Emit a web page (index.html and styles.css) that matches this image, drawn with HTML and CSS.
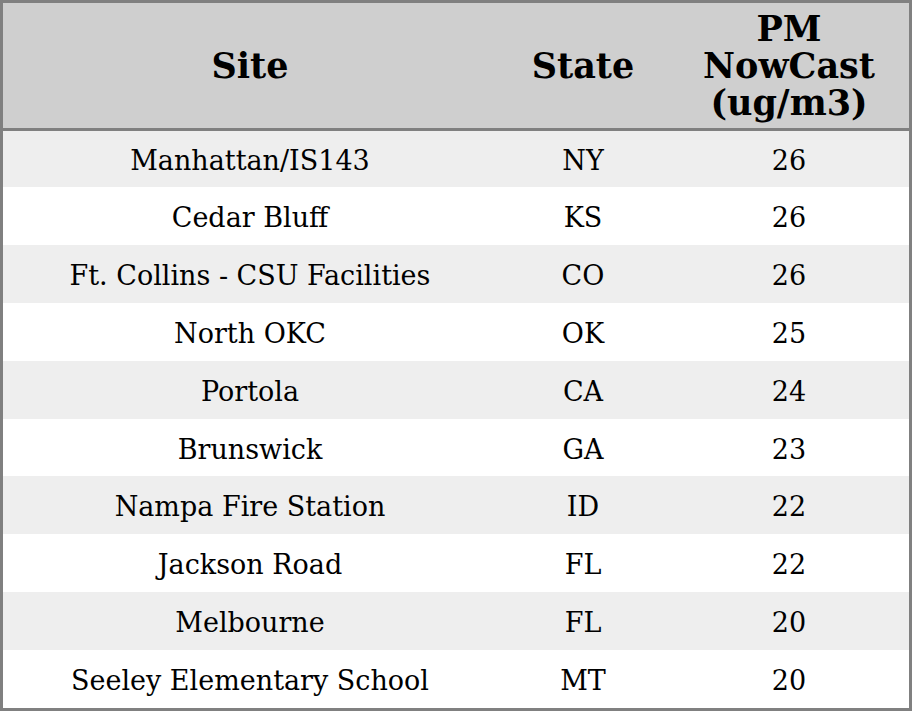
FILE: index.html
```html
<!DOCTYPE html>
<html>
<head>
<meta charset="utf-8">
<link rel="stylesheet" href="styles.css">
</head>
<body>
<table class="aq">
  <colgroup>
    <col class="c-site"><col class="c-state"><col class="c-pm">
  </colgroup>
  <thead>
    <tr><th>Site</th><th>State</th><th>PM<br>NowCast<br>(ug/m3)</th></tr>
  </thead>
  <tbody>
    <tr><td>Manhattan/IS143</td><td>NY</td><td>26</td></tr>
    <tr><td>Cedar Bluff</td><td>KS</td><td>26</td></tr>
    <tr><td>Ft. Collins - CSU Facilities</td><td>CO</td><td>26</td></tr>
    <tr><td>North OKC</td><td>OK</td><td>25</td></tr>
    <tr><td>Portola</td><td>CA</td><td>24</td></tr>
    <tr><td>Brunswick</td><td>GA</td><td>23</td></tr>
    <tr><td>Nampa Fire Station</td><td>ID</td><td>22</td></tr>
    <tr><td>Jackson Road</td><td>FL</td><td>22</td></tr>
    <tr><td>Melbourne</td><td>FL</td><td>20</td></tr>
    <tr><td>Seeley Elementary School</td><td>MT</td><td>20</td></tr>
  </tbody>
</table>
</body>
</html>
```
FILE: styles.css
```css
html, body {
  margin: 0;
  padding: 0;
  background: #ffffff;
}
.aq {
  width: 912px;
  border-collapse: separate;
  border-spacing: 0;
  border: 3px solid #808080;
  box-sizing: border-box;
  font-family: "DejaVu Serif", serif;
  color: #000;
  table-layout: fixed;
}
.c-site { width: 494px; }
.c-state { width: 172px; }
.c-pm { width: 240px; }
.aq th {
  background: #cfcfcf;
  font-size: 35px;
  line-height: 37px;
  font-weight: bold;
  height: 125px;
  padding: 0;
  border-bottom: 3px solid #808080;
  text-align: center;
  vertical-align: middle;
}
.aq td {
  font-size: 27px;
  line-height: 31px;
  height: 57.9px;
  box-sizing: border-box;
  padding: 3px 0 0 0;
  text-align: center;
  vertical-align: middle;
}
.aq tbody tr:first-child td {
  height: 56px;
  padding-top: 2px;
}
.aq tbody tr:nth-child(odd) td {
  background: #eeeeee;
}
```
